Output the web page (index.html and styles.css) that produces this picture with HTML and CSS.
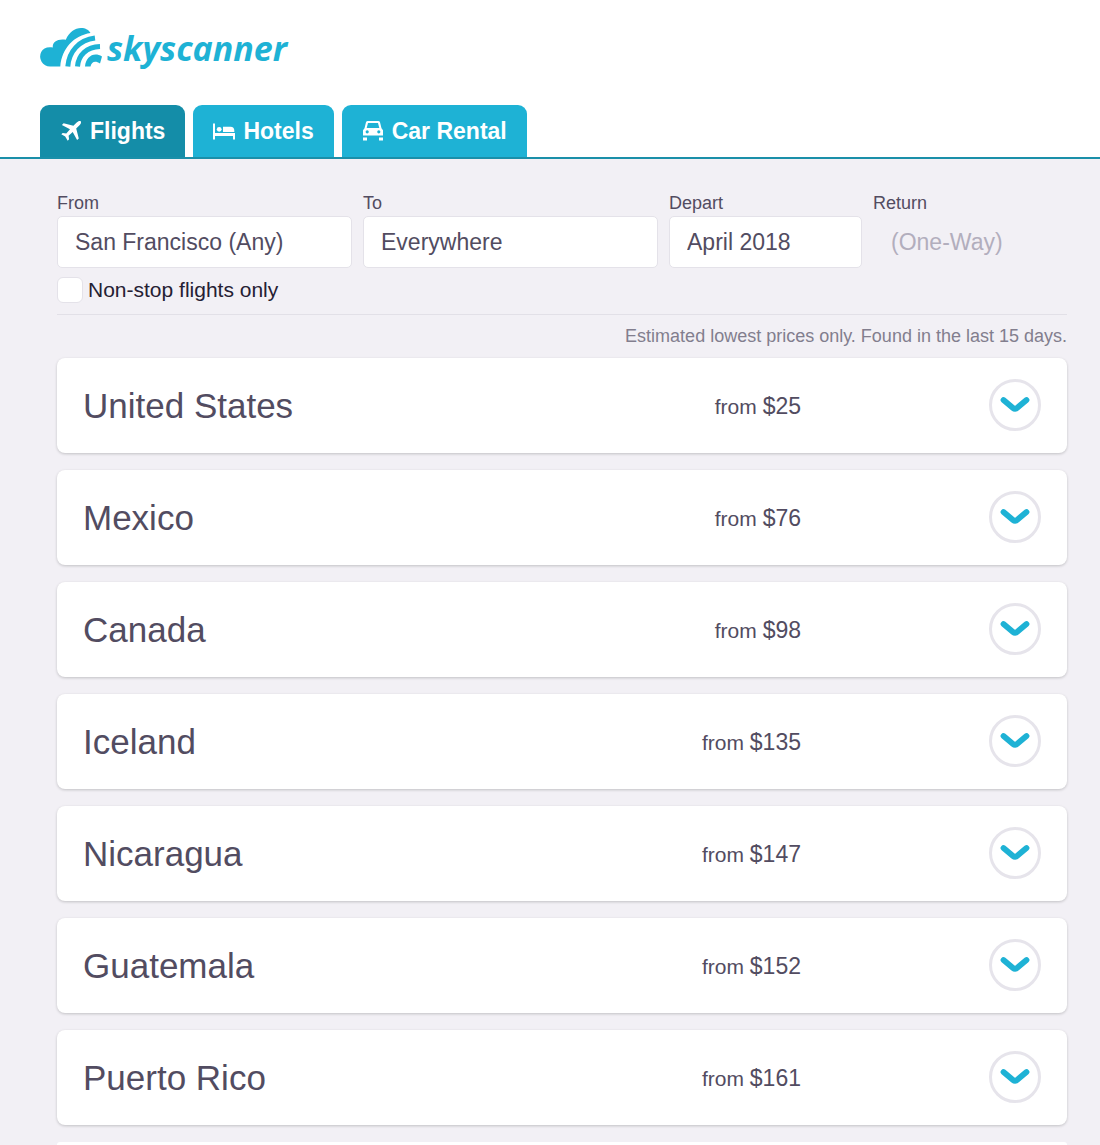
FILE: index.html
```
<!DOCTYPE html>
<html lang="en">
<head>
<meta charset="utf-8">
<meta name="viewport" content="width=device-width, initial-scale=1">
<title>Skyscanner</title>
<link rel="stylesheet" href="styles.css">
</head>
<body>
<svg class="sprite" aria-hidden="true">
  <symbol id="chevron" viewBox="0 0 30 18"><path d="M3.500 4 13 11.900Q15 13.500 17 11.900L26.500 4" fill="none" stroke="currentColor" stroke-width="5.800" stroke-linecap="round" stroke-linejoin="round"/></symbol>
</svg>
<header class="header">
  <a class="logo" href="#">
    <svg class="logo-mark" viewBox="0 0 64 40" aria-hidden="true">
      <g fill="none" stroke="#1eb2d5" stroke-width="5">
        <path d="M27.800 38.500C29 23.500 39 12 55 10"/>
        <path d="M37.500 38.500C38.500 27 46.500 19 60 18.600"/>
      </g>
      <path d="M24 38.500H10A10 10 0 0 1 1.200 24C3 20.300 7.500 18.300 12.800 19.500C12.300 14 17.500 10.500 25.800 11.800C29 4 35 0 41 0C45.500 0 49 2 50.500 5C34 7.500 22 20 20.300 38.500Z" fill="#1eb2d5"/>
      <path d="M45 38.500C46 29 53.500 23.500 62 28.500L60 35.500C55.500 32.500 51.500 33.500 50.500 38.500Z" fill="#1eb2d5"/>
    </svg>
    <span class="logo-text">skyscanner</span>
  </a>
  <nav class="tabs">
    <a class="tab tab-active" href="#">
      <svg class="icon" viewBox="0 0 22 22" aria-hidden="true"><path d="M20.700 1.300C19.700.400 18 1.200 16.700 2.500L13.400 5.800 3.600 3.200 1.900 4.900 10 9.300 6.300 13.400 2.700 12.900 1.300 14.300 5.200 16.600 7.700 20.700 9.100 19.300 8.600 15.700 12.700 12 17.100 20.100 18.800 18.400 16.200 8.600 19.500 5.300C20.800 4 21.600 2.300 20.700 1.300Z" fill="currentColor"/></svg>
      Flights
    </a>
    <a class="tab" href="#">
      <svg class="icon" viewBox="0 0 22 22" aria-hidden="true"><path d="M0 3.500H2V13H22V19.500H20V16H2V19.500H0ZM10 12V6.700H17.500Q21.300 6.700 21.300 10.500V12Z" fill="currentColor"/><circle cx="6.200" cy="9.300" r="2.400" fill="currentColor"/></svg>
      Hotels
    </a>
    <a class="tab" href="#">
      <svg class="icon" viewBox="0 0 22 22" aria-hidden="true"><path fill-rule="evenodd" d="M5.800 1H16.200Q17.600 1 18 2.300L19.500 8.200 21 10.200V15.500H1V10.200L2.500 8.200 4 2.300Q4.400 1 5.800 1ZM6 3 4.700 8H17.300L16 3ZM5.200 10.200A1.600 1.600 0 1 0 5.200 13.400A1.600 1.600 0 1 0 5.200 10.200ZM16.800 10.200A1.600 1.600 0 1 0 16.800 13.400A1.600 1.600 0 1 0 16.800 10.200Z" fill="currentColor"/><path d="M1 17.500H5V20.500H1ZM17 17.500H21V20.500H17Z" fill="currentColor"/></svg>
      Car Rental
    </a>
  </nav>
</header>
<main class="main">
  <form class="search">
    <div class="fields">
      <div class="field"><label for="from">From</label><input id="from" type="text" value="San Francisco (Any)"></div>
      <div class="field"><label for="to">To</label><input id="to" type="text" value="Everywhere"></div>
      <div class="field"><label for="depart">Depart</label><input id="depart" type="text" value="April 2018"></div>
      <div class="field"><label for="return">Return</label><input id="return" class="input-empty" type="text" placeholder="(One-Way)"></div>
    </div>
    <label class="nonstop"><input type="checkbox">Non-stop flights only</label>
  </form>
  <p class="note">Estimated lowest prices only. Found in the last 15 days.</p>
  <ul class="results">
    <li class="card"><h2>United States</h2><p class="price">from <strong>$25</strong></p><button class="expand" type="button" aria-label="Show United States"><svg><use href="#chevron"/></svg></button></li>
    <li class="card"><h2>Mexico</h2><p class="price">from <strong>$76</strong></p><button class="expand" type="button" aria-label="Show Mexico"><svg><use href="#chevron"/></svg></button></li>
    <li class="card"><h2>Canada</h2><p class="price">from <strong>$98</strong></p><button class="expand" type="button" aria-label="Show Canada"><svg><use href="#chevron"/></svg></button></li>
    <li class="card"><h2>Iceland</h2><p class="price">from <strong>$135</strong></p><button class="expand" type="button" aria-label="Show Iceland"><svg><use href="#chevron"/></svg></button></li>
    <li class="card"><h2>Nicaragua</h2><p class="price">from <strong>$147</strong></p><button class="expand" type="button" aria-label="Show Nicaragua"><svg><use href="#chevron"/></svg></button></li>
    <li class="card"><h2>Guatemala</h2><p class="price">from <strong>$152</strong></p><button class="expand" type="button" aria-label="Show Guatemala"><svg><use href="#chevron"/></svg></button></li>
    <li class="card"><h2>Puerto Rico</h2><p class="price">from <strong>$161</strong></p><button class="expand" type="button" aria-label="Show Puerto Rico"><svg><use href="#chevron"/></svg></button></li>
    <li class="card-next"></li>
  </ul>
</main>
</body>
</html>
```
FILE: styles.css
```
* { box-sizing: border-box; }

body {
  margin: 0;
  min-height: 100vh;
  display: flex;
  flex-direction: column;
  background: #f2f0f5;
  color: #524c61;
  font-family: "Liberation Sans", Arial, sans-serif;
}

.sprite { display: none; }

.header {
  padding: 28px 40px 0;
  background: #fff;
  border-bottom: 2px solid #1a8fa9;
}

.logo {
  display: flex;
  align-items: center;
  gap: 3px;
  height: 40px;
  color: #1eb2d5;
  text-decoration: none;
}

.logo-mark { width: 64px; height: 40px; }

.logo-text {
  font: italic 700 34px/40px "Open Sans", sans-serif;
}

.tabs {
  display: flex;
  gap: 8px;
  margin-top: 37px;
}

.tab {
  display: flex;
  align-items: center;
  gap: 8px;
  height: 52px;
  padding: 0 20px;
  border-radius: 9px 9px 0 0;
  background: #1eb2d5;
  color: #fff;
  font-size: 23px;
  font-weight: 700;
  text-decoration: none;
}

.tab-active { background: #148da8; }

.icon { width: 22px; height: 22px; }

.main {
  flex: 1;
  display: flex;
  flex-direction: column;
  padding: 32px 33px 0 57px;
}

.search {
  padding-bottom: 11px;
  border-bottom: 1px solid #e2e0e7;
}

.fields {
  display: grid;
  grid-template-columns: 295fr 295fr 193fr 194fr;
  gap: 11px;
}

.field label {
  display: block;
  font-size: 18px;
  line-height: 24px;
}

.field input {
  display: block;
  width: 100%;
  height: 52px;
  margin-top: 1px;
  padding: 0 17px;
  border: 1px solid #e4e2e9;
  border-radius: 5px;
  background: #fff;
  color: #524c61;
  font: 23px "Liberation Sans", Arial, sans-serif;
}

.field .input-empty {
  border-color: transparent;
  background: transparent;
}

.input-empty::placeholder { color: #b2aebd; opacity: 1; }

.nonstop {
  display: flex;
  align-items: center;
  gap: 5px;
  margin-top: 9px;
  color: #252033;
  font-size: 21px;
  line-height: 26px;
}

.nonstop input {
  appearance: none;
  width: 26px;
  height: 26px;
  margin: 0;
  border: 1px solid #e4e2e9;
  border-radius: 6px;
  background: #fff;
}

.note {
  margin: 9px 0 10px;
  color: #827e8e;
  font-size: 18px;
  line-height: 24px;
  text-align: right;
}

.results {
  flex: 1;
  display: flex;
  flex-direction: column;
  gap: 17px;
  margin: 0;
  padding: 0;
  list-style: none;
}

.card {
  display: grid;
  grid-template-columns: 1fr auto 240px;
  align-items: center;
  padding: 21px 26px 22px;
  border-radius: 8px;
  background: #fff;
  box-shadow: 0 1px 3px rgba(0, 0, 0, 0.2);
}

.card h2 {
  margin: 0;
  padding-top: 2px;
  font-size: 35px;
  font-weight: 400;
  line-height: 50px;
}

.price {
  margin: 0;
  padding-top: 2px;
  font-size: 21px;
}

.price strong {
  font-size: 23px;
  font-weight: 400;
}

.expand {
  display: grid;
  place-items: center;
  justify-self: end;
  width: 52px;
  height: 52px;
  padding: 0;
  border: 3px solid #e6e4eb;
  border-radius: 50%;
  background: #fff;
  color: #1eb2d5;
}

.expand svg { width: 30px; height: 18px; }

.card-next {
  flex: 1;
  border-radius: 8px 8px 0 0;
  background: #fff;
}
```
